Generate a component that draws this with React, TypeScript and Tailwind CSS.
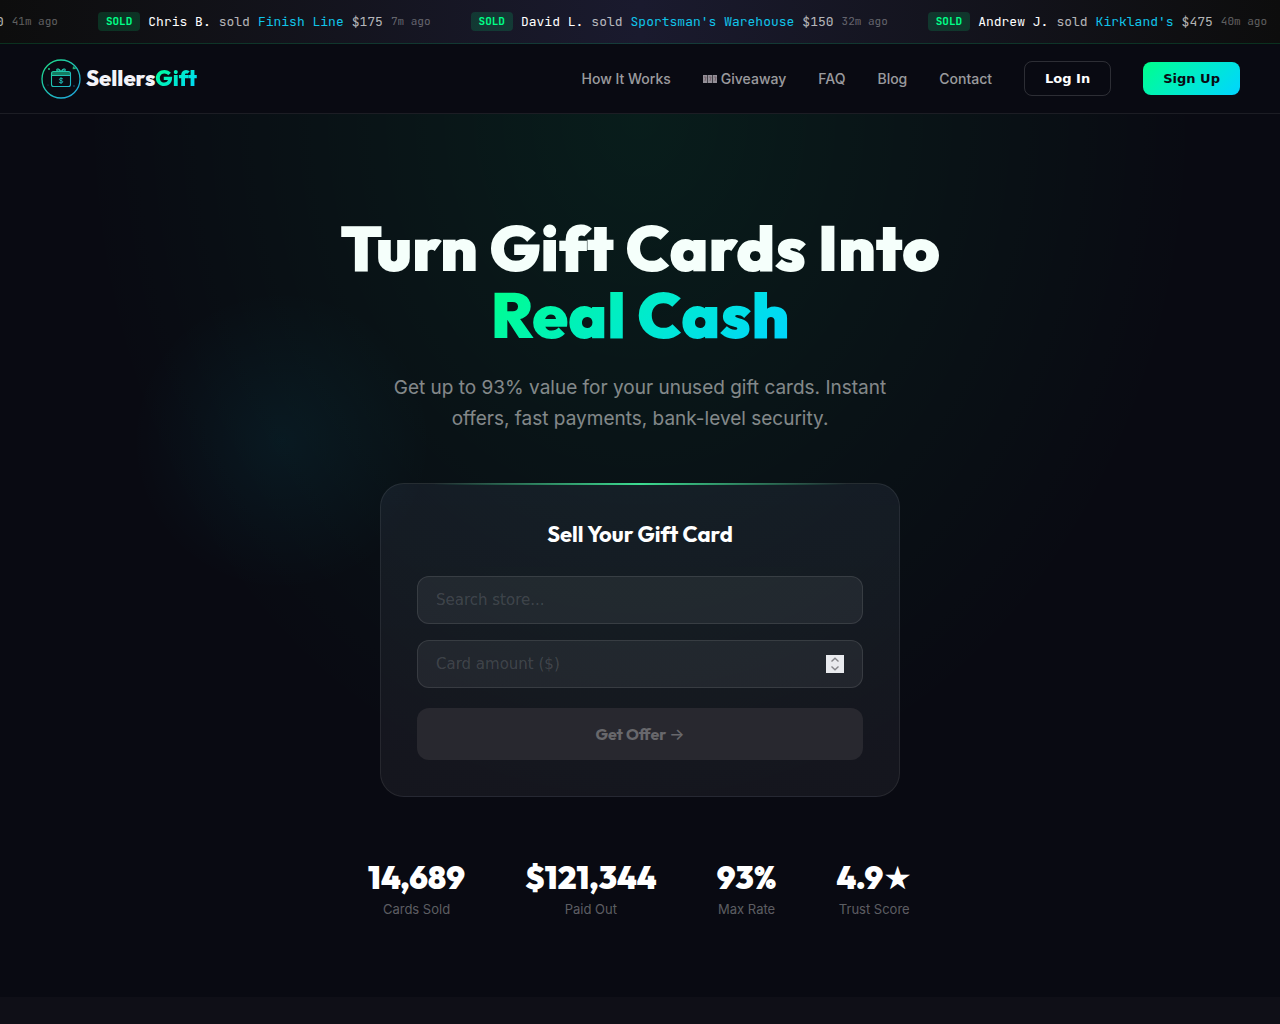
import { useState } from 'react'

type Sale = {
  name?: string
  store?: string
  amount: string
  time: string
}

const sales: Sale[] = [
  { amount: '$50', time: '41m ago' },
  { name: 'Chris B.', store: 'Finish Line', amount: '$175', time: '7m ago' },
  { name: 'David L.', store: "Sportsman's Warehouse", amount: '$150', time: '32m ago' },
  { name: 'Andrew J.', store: "Kirkland's", amount: '$475', time: '40m ago' },
]

const stats = [
  { value: '14,689', label: 'Cards Sold' },
  { value: '$121,344', label: 'Paid Out' },
  { value: '93%', label: 'Max Rate' },
  { value: '4.9', label: 'Trust Score', star: true },
]

const display = "font-['Outfit',sans-serif]"
const ui = "font-['DejaVu_Sans',sans-serif]"

function LogoMark() {
  return (
    <svg width="42" height="42" viewBox="0 0 42 42" fill="none" aria-hidden="true">
      <defs>
        <linearGradient id="mark" x1="6" y1="4" x2="36" y2="38" gradientUnits="userSpaceOnUse">
          <stop stopColor="#1fd98e" />
          <stop offset="1" stopColor="#1fa8dc" />
        </linearGradient>
      </defs>
      <circle cx="21" cy="21" r="19" stroke="url(#mark)" strokeWidth="1.3" />
      <g stroke="url(#mark)" strokeWidth="1.1" strokeLinecap="round" strokeLinejoin="round">
        <rect x="11.5" y="13.5" width="19" height="15" rx="2" />
        <path d="M11.5 17.5h19M20.5 13c-1.2-2-3.4-2.6-3.8-1.2-.2 1 1 1.4 3.8 1.2ZM21.5 13c1.2-2 3.4-2.6 3.8-1.2.2 1-1 1.4-3.8 1.2Z" />
        <path d="M22.8 20.8c-.8-.8-3.4-.8-3.4.6 0 1.6 3.4.8 3.4 2.4 0 1.3-2.6 1.3-3.6.5M21 19.6v6" strokeWidth=".9" />
      </g>
      <path d="M12 14h18v3H12z" fill="#1fd9a0" fillOpacity=".55" />
      <path d="M33 8l3.4 3-3.8.2z" fill="#1fd98e" fillOpacity=".8" />
      <circle cx="9" cy="11" r=".9" fill="#1fd98e" />
      <circle cx="34" cy="28" r=".8" fill="#1fa8dc" fillOpacity=".6" />
      <circle cx="8" cy="27" r=".6" fill="#1fa8dc" fillOpacity=".5" />
    </svg>
  )
}

function SlotIcon() {
  return (
    <svg width="14" height="10" viewBox="0 0 14 10" aria-hidden="true">
      {[0, 5, 10].map((x) => (
        <g key={x}>
          <rect x={x} y="1" width="4.4" height="8" fill="#938f97" />
          <path d={`M${x + 1} 3h2l-1 4`} stroke="#6e5660" strokeWidth=".8" fill="none" />
        </g>
      ))}
    </svg>
  )
}

function Ticker() {
  return (
    <div className="flex h-11 items-center justify-end gap-10 overflow-hidden border-b border-[#00ff88]/15 bg-linear-to-r from-[#0d0d0d] via-[#1a1a2e] to-[#0d0d0d] pr-[13px] font-['JetBrains_Mono','DejaVu_Sans_Mono',monospace] text-[13px] whitespace-nowrap text-white/70">
      {sales.map((sale) => (
        <div key={sale.time} className="flex shrink-0 items-center gap-2">
          {sale.name && (
            <>
              <span className="rounded-sm bg-[#00ff88]/15 px-2 py-0.5 text-[11px] leading-[15px] font-bold text-[#00ff88]">
                SOLD
              </span>
              <span className="text-white">{sale.name}</span>
              <span>sold</span>
              <span className="text-[#10c4ea]">{sale.store}</span>
            </>
          )}
          <span>{sale.amount}</span>
          <span className="text-[11px] text-white/35">{sale.time}</span>
        </div>
      ))}
    </div>
  )
}

function Navbar() {
  const link = 'flex items-center gap-1 text-sm font-medium text-white/60 hover:text-white'

  return (
    <header className="flex h-[70px] items-center justify-between border-b border-white/8 bg-[#090a12] px-10">
      <a href="#" className={`flex items-center gap-1 text-[22px] font-extrabold ${display}`}>
        <LogoMark />
        <span className="text-[#f3f3f8]">
          Sellers
          <span className="bg-linear-135 from-[#00ff88] to-[#00d4ff] bg-clip-text text-transparent">
            Gift
          </span>
        </span>
      </a>
      <nav className="flex items-center gap-8">
        <a href="#how" className={link}>How It Works</a>
        <a href="#giveaway" className={link}>
          <SlotIcon />
          Giveaway
        </a>
        <a href="#faq" className={link}>FAQ</a>
        <a href="#blog" className={link}>Blog</a>
        <a href="#contact" className={link}>Contact</a>
        <button
          type="button"
          className={`h-[35px] rounded-lg border border-white/15 px-5 text-[13px] font-bold text-white ${ui}`}
        >
          Log In
        </button>
        <button
          type="button"
          className={`h-[33px] rounded-lg bg-linear-135 from-[#00ff88] to-[#00d4ff] px-5 text-[13px] font-bold text-[#0a0a12] ${ui}`}
        >
          Sign Up
        </button>
      </nav>
    </header>
  )
}

function OfferForm() {
  const [store, setStore] = useState('')
  const [amount, setAmount] = useState('')

  const field = `h-12 w-full rounded-xl border border-white/10 bg-white/6 px-[18px] text-[15px] text-white outline-none placeholder:text-white/15 ${ui}`

  const step = (by: number) => setAmount(String(Math.max(0, Number(amount) + by)))

  return (
    <form
      onSubmit={(e) => e.preventDefault()}
      className="relative mx-auto w-full max-w-[520px] rounded-3xl border border-white/8 bg-linear-to-b from-[#b4c8ff]/7 to-white/5 px-9 pt-[34px] pb-9"
    >
      <div className="absolute inset-x-0 -top-px mx-auto h-0.5 w-4/5 bg-linear-to-r from-transparent via-[#3ddc91] to-transparent" />
      <h2 className={`mb-[26px] text-center text-[22px] leading-8 font-bold text-white ${display}`}>
        Sell Your Gift Card
      </h2>
      <input
        type="text"
        aria-label="Store"
        placeholder="Search store..."
        value={store}
        onChange={(e) => setStore(e.target.value)}
        className={`mb-4 block ${field}`}
      />
      <div className="relative mb-5">
        <input
          type="number"
          aria-label="Card amount"
          placeholder="Card amount ($)"
          value={amount}
          onChange={(e) => setAmount(e.target.value)}
          className={`block [&::-webkit-inner-spin-button]:appearance-none ${field}`}
        />
        <div className="absolute top-[15px] right-[19px] flex h-[18px] w-[18px] flex-col bg-[#e9eaee] text-[#85858a]">
          <button type="button" aria-label="Increase amount" onClick={() => step(1)}>
            <svg width="18" height="9" viewBox="0 0 18 9" fill="none" stroke="currentColor" strokeWidth="1.4" className="block">
              <path d="M5.5 6.5L9 3.3l3.5 3.2" />
            </svg>
          </button>
          <button type="button" aria-label="Decrease amount" onClick={() => step(-1)}>
            <svg width="18" height="9" viewBox="0 0 18 9" fill="none" stroke="currentColor" strokeWidth="1.4" className="block">
              <path d="M5.5 2.5L9 5.7l3.5-3.2" />
            </svg>
          </button>
        </div>
      </div>
      <button
        type="submit"
        disabled={!store || !amount}
        className={`h-[52px] w-full rounded-xl bg-[#28282f] text-base font-bold text-[#68686c] ${display}`}
      >
        Get Offer <span className="font-['Inter',sans-serif] font-medium">→</span>
      </button>
    </form>
  )
}

export default function App() {
  return (
    <div className="min-h-screen bg-[#0f0f17] font-['Inter',sans-serif] text-white">
      <Ticker />
      <Navbar />
      <main className="bg-[#090a12] bg-[radial-gradient(ellipse_560px_700px_at_50%_0%,rgba(0,255,136,0.08),transparent),radial-gradient(ellipse_150px_150px_at_22%_37%,rgba(0,212,255,0.06),transparent)] px-6 pt-[100px] pb-20">
        <h1 className={`text-center text-[64px] leading-[67px] font-black text-[#f5fffb] ${display}`}>
          Turn Gift Cards Into
          <span className="mx-auto block w-fit bg-linear-135 from-[#00ff88] to-[#00d4ff] bg-clip-text text-transparent">
            Real Cash
          </span>
        </h1>
        <p className="mx-auto mt-6 mb-[49px] max-w-[520px] text-center text-[19px] leading-[31px] text-white/50">
          Get up to 93% value for your unused gift cards. Instant offers, fast payments, bank-level
          security.
        </p>
        <OfferForm />
        <div className="mt-[60px] flex justify-center gap-[60px]">
          {stats.map((stat) => (
            <div key={stat.label} className="text-center">
              <div className={`text-[32px] leading-10 font-black text-white ${display}`}>
                {stat.value}
                {stat.star && <span className={`leading-none font-normal ${ui}`}>★</span>}
              </div>
              <div className="mt-1 text-[13px] leading-4 text-white/35">{stat.label}</div>
            </div>
          ))}
        </div>
      </main>
    </div>
  )
}
